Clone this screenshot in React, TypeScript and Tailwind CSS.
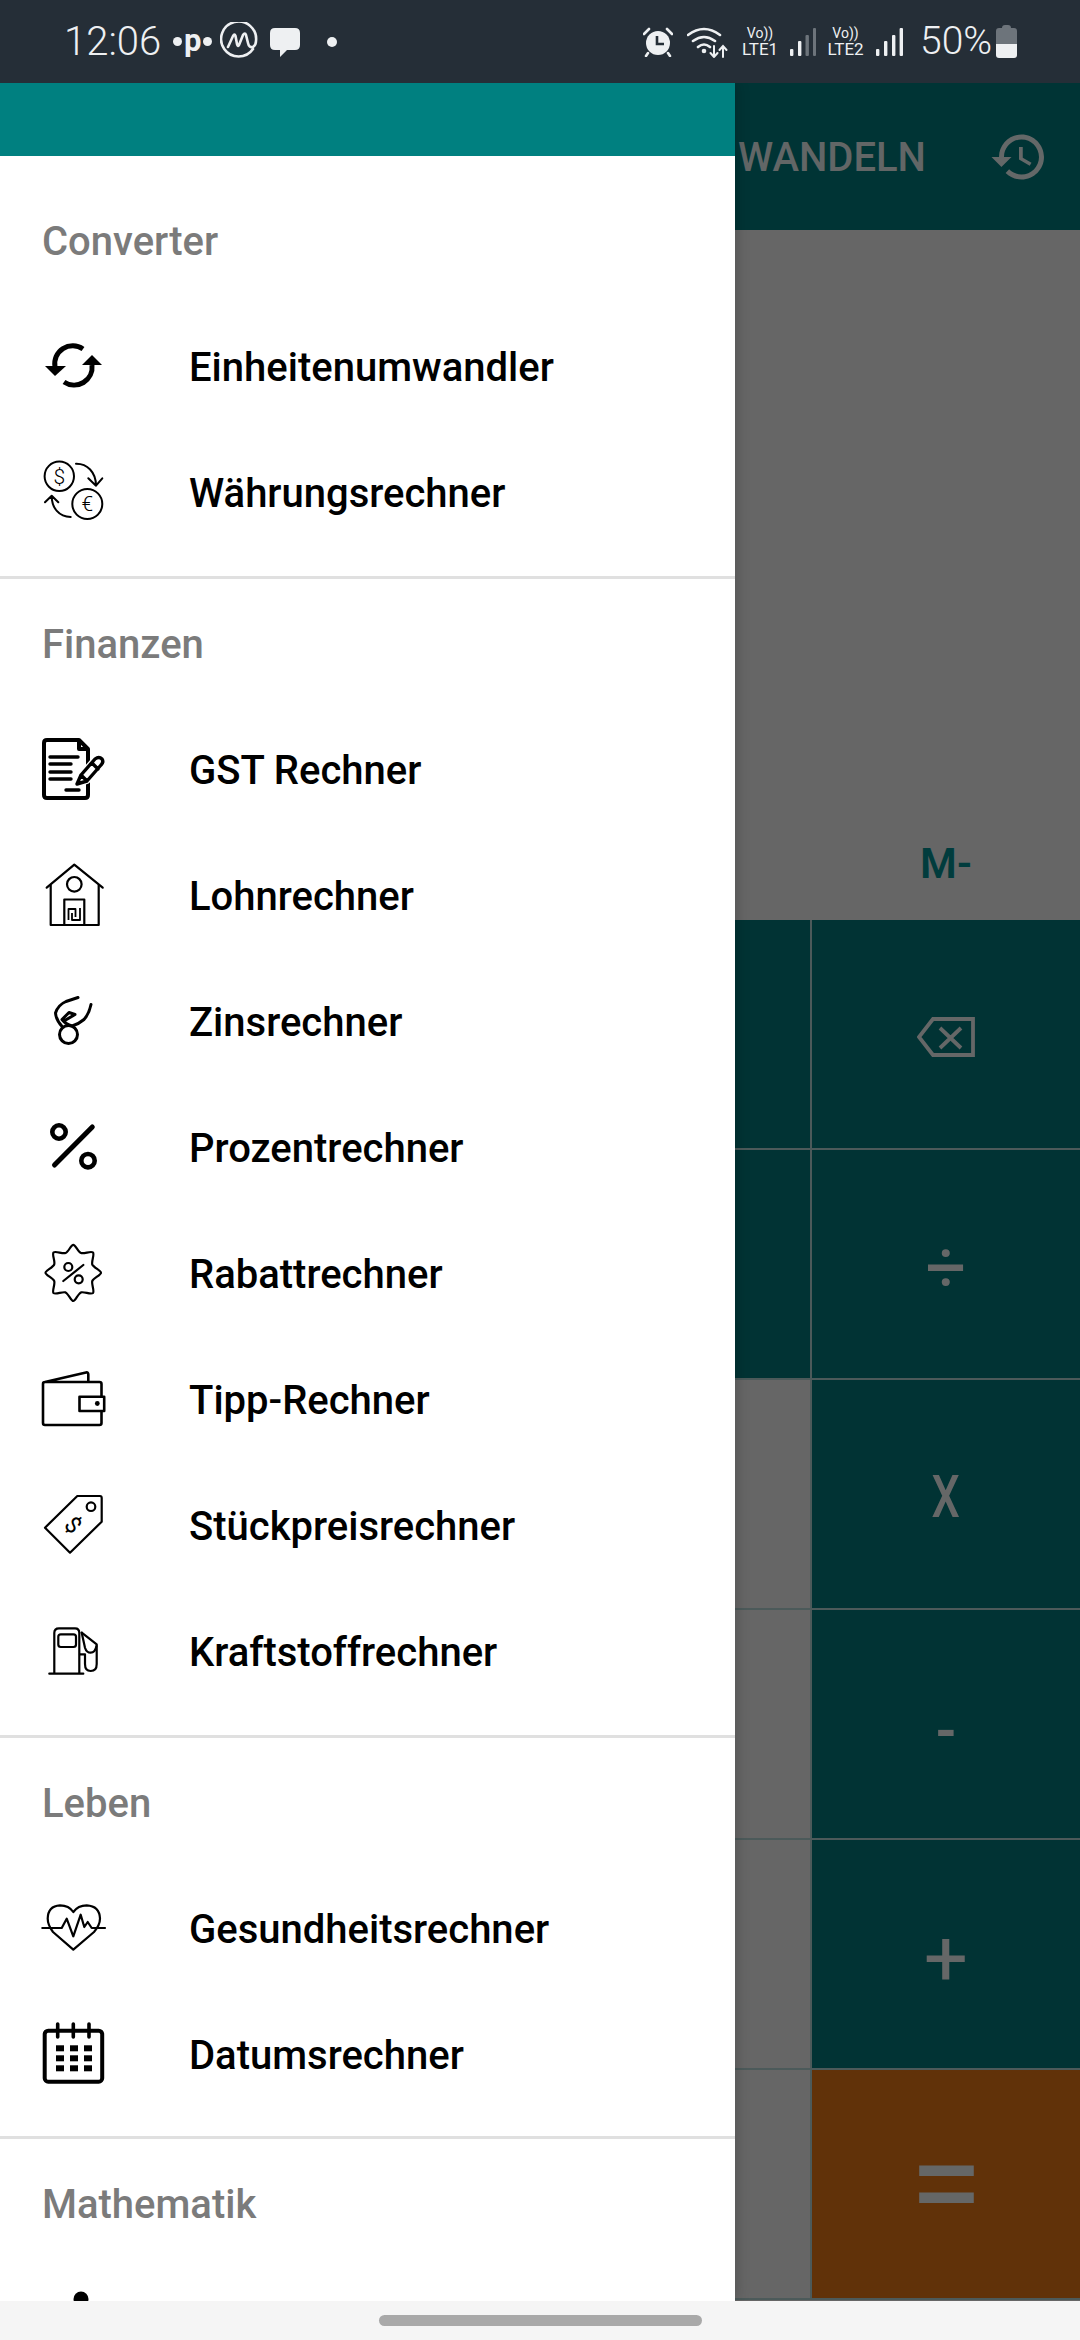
import type { ReactNode } from 'react';

const font = { fontFamily: 'Roboto, sans-serif' };

function Icon({ children }: { children: ReactNode }) {
  return (
    <svg viewBox="0 0 64 64" className="w-[64px] h-[64px] shrink-0 overflow-visible" fill="none" stroke="#000" strokeLinecap="round" strokeLinejoin="round">
      {children}
    </svg>
  );
}

const RefreshIcon = () => (
  <Icon>
    <path d="M41 14A18 18 0 0 0 13 32" strokeWidth="5" strokeLinecap="butt" />
    <path d="M22 47A18 18 0 0 0 50 30" strokeWidth="5" strokeLinecap="butt" />
    <path d="M3 31H24L13 41Z" fill="#000" stroke="none" />
    <path d="M50 20L40 30H60Z" fill="#000" stroke="none" />
  </Icon>
);

const CurrencyIcon = () => (
  <Icon>
    <g strokeWidth="2">
      <circle cx="17.3" cy="15.3" r="14.7" />
      <circle cx="45.3" cy="43" r="15" />
      <path d="M34 2.7C45 2.5 54 11 54 24.7M46.3 17.3L54 24.7L60.3 17.3" />
      <path d="M28.7 56C17 56 9.7 47 9.7 34.7M3 41.3L9.7 34.7L16.3 41.3" />
    </g>
    <text x="17.3" y="22.5" textAnchor="middle" fontSize="21" fontWeight="300" fill="#000" stroke="none" fontFamily="Roboto, sans-serif">$</text>
    <text x="45.3" y="50" textAnchor="middle" fontSize="21" fontWeight="300" fill="#000" stroke="none" fontFamily="Roboto, sans-serif">€</text>
  </Icon>
);

const DocIcon = () => (
  <Icon>
    <path d="M37 2H5Q2 2 2 5V57Q2 60 5 60H43Q46 60 46 57V11ZM37 2V11H46" strokeWidth="4" />
    <path d="M8 19H36M8 26H29M8 34H29M8 41H29M24 52H37" strokeWidth="3.4" />
    <path d="M36 46L39 37L53 21Q57 18 60 21Q62 24 59 27L45 43Z" fill="#fff" stroke="#fff" strokeWidth="6" />
    <path d="M35 46L39 37L53 21Q57 18 60 21Q62 24 59 27L45 43ZM39 37L45 43M50 25L56 31" strokeWidth="3.4" />
  </Icon>
);

const HouseIcon = () => (
  <Icon>
    <g strokeWidth="2.2" strokeLinecap="butt">
      <path d="M4.7 23.7L32.3 .6L60.7 23.7" strokeLinecap="round" />
      <path d="M8.7 21V61H56.7V21" />
      <circle cx="32.3" cy="20.3" r="7.3" />
      <path d="M22.3 61V35.5H42.3V61" />
      <path d="M26.5 56V45H33.5V53M30 49V56H38V44" strokeWidth="1.8" />
    </g>
  </Icon>
);

const InterestIcon = () => (
  <Icon>
    <g strokeWidth="3">
      <path d="M36 7.5L24 11.5Q16 15 13.5 23Q14 30 20.5 37" />
      <circle cx="26.5" cy="44.5" r="9" />
      <path d="M49 14.5Q47 24 42 29.5Q36 34.5 30 36Q24 34.5 20 29.5L27 22.5L33 24.5L22 31" />
    </g>
  </Icon>
);

const PercentIcon = () => (
  <Icon>
    <circle cx="17" cy="16" r="6.7" strokeWidth="4.6" />
    <circle cx="46" cy="44.7" r="6.7" strokeWidth="4.6" />
    <path d="M12.5 49L50.3 11" strokeWidth="5" />
  </Icon>
);

const DiscountIcon = () => (
  <Icon>
    <g strokeWidth="2.2">
      <path d="M31.3 2.8C33.5 2.8 36 10 39 11C42 12.2 49 8.5 51 10.5C52.7 12.5 49.2 19.5 50.3 22.5C51.5 25.5 59 28.5 59 30.7C59 33 51.5 36 50.3 39C49.2 42 52.7 49 51 51C49 53 42 49.3 39 50.4C36 51.6 33.5 59 31.3 59C29 59 26.5 51.6 23.5 50.4C20.5 49.3 13.5 53 11.5 51C9.8 49 13.4 42 12.2 39C11 36 3.5 33 3.5 30.7C3.5 28.5 11 25.5 12.2 22.5C13.4 19.5 9.8 12.5 11.5 10.5C13.5 8.5 20.5 12.2 23.5 11C26.5 10 29 2.8 31.3 2.8Z" />
      <path d="M21.3 39L41.3 23" />
      <circle cx="26.3" cy="25" r="4" />
      <circle cx="36.7" cy="37.3" r="4" />
    </g>
  </Icon>
);

const WalletIcon = () => (
  <Icon>
    <g strokeWidth="2.6">
      <path d="M3 14H57.5Q59.5 14 59.5 16V55Q59.5 57 57.5 57H3Q1 57 1 55V16Q1 14 3 14ZM3 14L44 4.5Q46.3 4 46.3 6.5V14" />
      <rect x="37.5" y="28.7" width="24.7" height="14.3" fill="#fff" />
      <circle cx="55.3" cy="35.5" r="2.4" fill="#000" stroke="none" />
    </g>
  </Icon>
);

const TagIcon = () => (
  <Icon>
    <g strokeWidth="2.2">
      <path d="M35.3 2H58Q59.7 2 59.7 4V27.7L28 58.7L3 33.7Z" />
      <circle cx="49" cy="12.7" r="4.3" />
    </g>
    <text x="31.3" y="39" textAnchor="middle" fontSize="23" fill="#000" stroke="none" fontFamily="Roboto, sans-serif" transform="rotate(45 31.3 31)">$</text>
  </Icon>
);

const PumpIcon = () => (
  <Icon>
    <g strokeWidth="2.2">
      <path d="M12.3 53.7V13Q12.3 8.3 17 8.3H33Q37.3 8.3 37.3 13V53.7M7.3 53.7H41.3" />
      <rect x="16.3" y="14.3" width="17.7" height="12.7" rx="2.5" />
      <path d="M39.7 12.7L54.7 24.3V44Q54.7 51 48.7 51Q43 51 43 44V34.3H38" />
      <path d="M39.7 12.7L43 27.7Q44.5 32.7 48.7 32.7Q53 32.7 54.5 26" />
    </g>
  </Icon>
);

const HeartIcon = () => (
  <Icon>
    <g strokeWidth="2.2">
      <path d="M31.3 52.7L11 35Q5.7 28 5.7 21.5Q6 9 18 8.3Q27 8.3 31.3 15Q36 8.3 44.7 8.3Q57.5 9 58 21.5Q58 28 52 35Z" />
      <path d="M.3 31H19.7L24.7 21.7L31.3 39.3L38.7 17.7L42.3 30L45.7 25L49.7 31H63" fill="#fff" />
    </g>
  </Icon>
);

const CalendarIcon = () => (
  <Icon>
    <rect x="2.7" y="7.7" width="57.5" height="51" rx="3.5" strokeWidth="4" />
    <path d="M15.7 1V14M31.3 1V14M47 1V14" strokeWidth="3.6" />
    <g fill="#000" stroke="none">
      <rect x="14" y="22.3" width="8" height="6" />
      <rect x="28" y="22.3" width="8" height="6" />
      <rect x="42" y="22.3" width="8" height="6" />
      <rect x="14" y="32.3" width="8" height="6" />
      <rect x="28" y="32.3" width="8" height="6" />
      <rect x="42" y="32.3" width="8" height="6" />
      <rect x="14" y="42.3" width="8" height="6" />
      <rect x="28" y="42.3" width="8" height="6" />
      <rect x="42" y="42.3" width="8" height="6" />
    </g>
  </Icon>
);

const NextIcon = () => (
  <Icon>
    <circle cx="39" cy="2" r="7.5" fill="#000" stroke="none" />
  </Icon>
);

function Row({ icon, label }: { icon: ReactNode; label: string }) {
  return (
    <div className="h-[126px] flex items-center pl-[42px] shrink-0">
      {icon}
      <span className="ml-[83px] pt-[2px] text-[40px] font-[470] leading-none text-black">{label}</span>
    </div>
  );
}

function Section({ title, children, first, pb = 'pb-[20px]' }: { title: string; children?: ReactNode; first?: boolean; pb?: string }) {
  return (
    <section className={first ? 'pt-[20px] pb-[20px]' : `border-t-[3px] border-[#e0e0e0] ${pb}`}>
      <div className="h-[128px] flex items-center pl-[42px] pt-[4px] text-[40px] font-[470] leading-none text-[#7b7b7b]">{title}</div>
      {children}
    </section>
  );
}

function Drawer() {
  return (
    <aside className="w-[735px] h-full shrink-0 flex flex-col bg-white relative z-10 overflow-hidden shadow-[2px_0_12px_rgba(0,0,0,0.18)]">
      <div className="h-[73px] bg-[#008080] shrink-0" />
      <Section title="Converter" first>
        <Row icon={<RefreshIcon />} label="Einheitenumwandler" />
        <Row icon={<CurrencyIcon />} label="Währungsrechner" />
      </Section>
      <Section title="Finanzen">
        <Row icon={<DocIcon />} label="GST Rechner" />
        <Row icon={<HouseIcon />} label="Lohnrechner" />
        <Row icon={<InterestIcon />} label="Zinsrechner" />
        <Row icon={<PercentIcon />} label="Prozentrechner" />
        <Row icon={<DiscountIcon />} label="Rabattrechner" />
        <Row icon={<WalletIcon />} label="Tipp-Rechner" />
        <Row icon={<TagIcon />} label="Stückpreisrechner" />
        <Row icon={<PumpIcon />} label="Kraftstoffrechner" />
      </Section>
      <Section title="Leben" pb="pb-[18px]">
        <Row icon={<HeartIcon />} label="Gesundheitsrechner" />
        <Row icon={<CalendarIcon />} label="Datumsrechner" />
      </Section>
      <Section title="Mathematik">
        <div className="pl-[42px] pt-[30px]">
          <NextIcon />
        </div>
      </Section>
    </aside>
  );
}

function KeyRow({ left, bg = 'bg-[#013334]', children }: { left: string; bg?: string; children: ReactNode }) {
  return (
    <div className="h-[230px] flex shrink-0 border-b-2 border-[#4c5a5a]">
      <div className={`w-[75px] shrink-0 border-r-2 border-[#4c5a5a] box-content ${left}`} />
      <div className={`flex-1 flex items-center justify-center text-[#656767] ${bg}`}>{children}</div>
    </div>
  );
}

function Calculator() {
  return (
    <main className="flex-1 min-w-0 flex flex-col overflow-hidden bg-[#666666]">
      <div className="h-[147px] shrink-0 bg-[#003435] flex items-center justify-between pl-[3px] pr-[31px]">
        <span className="text-[40px] font-medium text-[#626666] leading-none pt-[2px]">WANDELN</span>
        <svg viewBox="0 0 24 24" className="w-[60px] h-[60px]" fill="#646868">
          <path d="M13 3c-4.97 0-9 4.03-9 9H1l3.89 3.89.07.14L9 12H6c0-3.87 3.13-7 7-7s7 3.13 7 7-3.13 7-7 7c-1.93 0-3.68-.79-4.94-2.06l-1.42 1.42C8.27 19.99 10.51 21 13 21c4.97 0 9-4.03 9-9s-4.03-9-9-9zm-1 5v5l4.28 2.54.72-1.21-3.5-2.08V8H12z" />
        </svg>
      </div>
      <div className="h-[690px] shrink-0 flex items-end">
        <div className="w-[77px]" />
        <div className="flex-1 text-center text-[42px] font-semibold leading-none text-[#013c3d] pb-[35px]">M-</div>
      </div>
      <KeyRow left="bg-[#013334]">
        <svg viewBox="0 0 58 40" className="w-[58px] h-[40px] mt-[5px]" fill="none" stroke="#656767" strokeWidth="3.8">
          <path d="M16 2H56V38H16L2 20Z" />
          <path d="M23 11L44 31M44 11L23 31" />
        </svg>
      </KeyRow>
      <KeyRow left="bg-[#013334]">
        <span className="text-[72px] leading-none pt-[8px]">÷</span>
      </KeyRow>
      <KeyRow left="bg-[#666666]">
        <span className="text-[59px] font-medium leading-none pt-[4px] scale-x-[0.76]">X</span>
      </KeyRow>
      <KeyRow left="bg-[#666666]">
        <span className="text-[56px] font-bold leading-none pt-[13px]">-</span>
      </KeyRow>
      <KeyRow left="bg-[#666666]">
        <span className="text-[78px] leading-none pt-[9px]">+</span>
      </KeyRow>
      <KeyRow left="bg-[#666666]" bg="bg-[#613209]">
        <span className="text-[134px] leading-none">=</span>
      </KeyRow>
    </main>
  );
}

function StatusBar() {
  return (
    <header className="h-[83px] shrink-0 bg-[#252e37] flex items-center text-[#eef0f2]">
      <span className="ml-[64px] w-[109px] text-[40px] font-light leading-none">12:06</span>
      <span className="w-[47px] flex items-center text-[31px] font-bold leading-none">
        <span className="w-[9px] h-[9px] rounded-full bg-[#eef0f2]" />
        <span className="mx-[2px] -mt-[2px]">p</span>
        <span className="w-[9px] h-[9px] rounded-full bg-[#eef0f2]" />
      </span>
      <svg viewBox="0 0 38 38" className="w-[38px] h-[38px] mb-[1px]" fill="none" stroke="#eef0f2" strokeWidth="2.6" strokeLinecap="round" strokeLinejoin="round">
        <path d="M33 27A17.5 17.5 0 1 1 36 19Q36 23 33 25Q29 26 28 21L26 13Q25 10 23 13L19 23Q18 25 17 22L15.5 14Q14.5 11 13 14L8 25" />
      </svg>
      <svg viewBox="0 0 30 30" className="w-[30px] h-[30px] ml-[12px] mt-[1px]" fill="#eef0f2">
        <path d="M5 1H25Q30 1 30 6V18Q30 23 25 23H17L10 30V23H5Q0 23 0 18V6Q0 1 5 1Z" />
      </svg>
      <span className="ml-[27px] w-[10px] h-[10px] rounded-full bg-[#eef0f2]" />
      <div className="flex-1" />
      <svg viewBox="0 0 30 30" className="w-[30px] h-[30px]" fill="#eef0f2">
        <circle cx="15" cy="16" r="12" />
        <path d="M1 7L6 2M29 7L24 2M5 26L3 29M25 26L27 29" stroke="#eef0f2" strokeWidth="2.6" strokeLinecap="round" />
        <path d="M14 9V17H21" stroke="#252e37" strokeWidth="2.6" fill="none" />
      </svg>
      <svg viewBox="0 0 42 32" className="w-[42px] h-[32px] ml-[14px]" fill="none" stroke="#eef0f2" strokeWidth="2.6" strokeLinecap="round">
        <path d="M1 9Q17 -3 33 9M6 15Q17 7 28 15M11 21Q17 16 23 21" />
        <circle cx="17" cy="25" r="2.3" fill="#eef0f2" stroke="none" />
        <path d="M27 20V31M23.5 27L27 31L30.5 27M36 31V20M32.5 24L36 20L39.5 24" strokeWidth="2" />
      </svg>
      <div className="w-[38px] ml-[12px] flex flex-col items-center">
        <span className="text-[14px] leading-[15px]">Vo))</span>
        <span className="text-[17px] leading-[17px]">LTE1</span>
      </div>
      <svg viewBox="0 0 26 30" className="w-[26px] h-[30px] ml-[11px]">
        <rect x="0" y="22" width="3.4" height="7" rx="1" fill="#eef0f2" />
        <rect x="8" y="14" width="3.4" height="15" rx="1" fill="#eef0f2" />
        <rect x="15.5" y="8" width="3.4" height="21" rx="1" fill="#6d747b" />
        <rect x="23" y="1" width="3" height="28" rx="1" fill="#6d747b" />
      </svg>
      <div className="w-[39px] ml-[10px] flex flex-col items-center">
        <span className="text-[14px] leading-[15px]">Vo))</span>
        <span className="text-[17px] leading-[17px]">LTE2</span>
      </div>
      <svg viewBox="0 0 27 30" className="w-[27px] h-[30px] ml-[11px]" fill="#eef0f2">
        <rect x="0" y="22" width="3.4" height="7" rx="1" />
        <rect x="8" y="14" width="3.4" height="15" rx="1" />
        <rect x="16" y="8" width="3.4" height="21" rx="1" />
        <rect x="23.6" y="1" width="3.4" height="28" rx="1" />
      </svg>
      <span className="ml-[17px] text-[39px] font-light leading-none w-[72px]">50%</span>
      <svg viewBox="0 0 21 33" className="w-[21px] h-[33px] ml-[4px] mr-[63px]">
        <path d="M6 3Q6 0 9 0H12Q15 0 15 3H18Q21 3 21 6V19H0V6Q0 3 3 3Z" fill="#6d747b" />
        <path d="M0 19H21V30Q21 33 18 33H3Q0 33 0 30Z" fill="#eef0f2" />
      </svg>
    </header>
  );
}

export default function App() {
  return (
    <div className="w-[1080px] h-[2340px] flex flex-col overflow-hidden bg-[#f5f5f5]" style={font}>
      <StatusBar />
      <div className="h-[2218px] shrink-0 flex overflow-hidden">
        <Drawer />
        <Calculator />
      </div>
      <footer className="flex-1 flex items-center justify-center bg-[#f5f5f5]">
        <div className="w-[323px] h-[11px] rounded-full bg-[#a9a9a9]" />
      </footer>
    </div>
  );
}
